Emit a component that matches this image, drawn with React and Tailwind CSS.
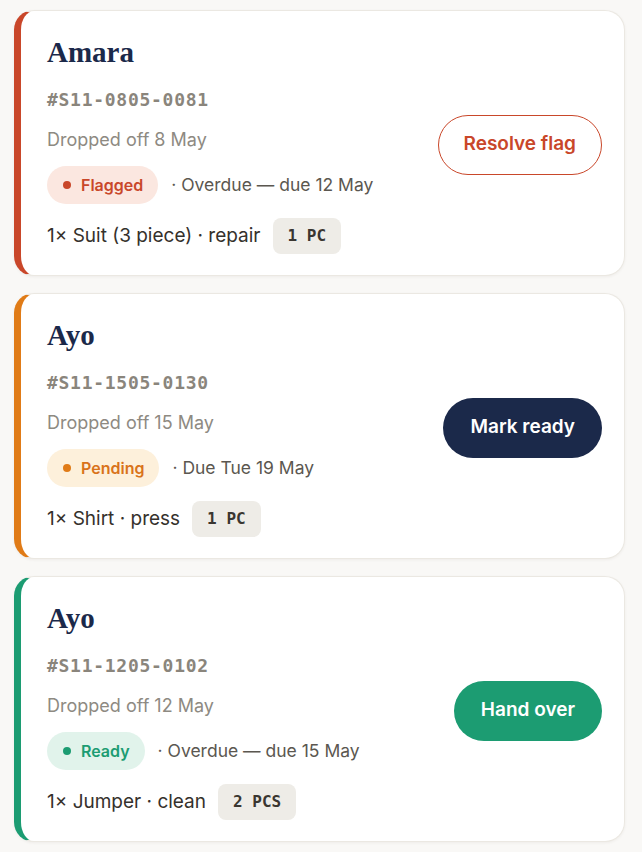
import React from 'react';

const orders = [
  {
    name: 'Amara',
    ref: '#S11-0805-0081',
    dropped: 'Dropped off 8 May',
    status: 'Flagged',
    due: '· Overdue — due 12 May',
    item: '1× Suit (3 piece) · repair',
    qty: '1 PC',
    tone: 'flagged',
    action: 'Resolve flag',
  },
  {
    name: 'Ayo',
    ref: '#S11-1505-0130',
    dropped: 'Dropped off 15 May',
    status: 'Pending',
    due: '· Due Tue 19 May',
    item: '1× Shirt · press',
    qty: '1 PC',
    tone: 'pending',
    action: 'Mark ready',
  },
  {
    name: 'Ayo',
    ref: '#S11-1205-0102',
    dropped: 'Dropped off 12 May',
    status: 'Ready',
    due: '· Overdue — due 15 May',
    item: '1× Jumper · clean',
    qty: '2 PCS',
    tone: 'ready',
    action: 'Hand over',
  },
];

const tones = {
  flagged: {
    bar: 'border-l-[#c9472a]',
    pill: 'bg-[#fbe7e0] text-[#c9472a]',
    dot: 'bg-[#c9472a]',
    button: 'border-[1.5px] border-[#c9472a] text-[#c9472a] bg-white px-[25px]',
  },
  pending: {
    bar: 'border-l-[#e07b17]',
    pill: 'bg-[#fdf0db] text-[#d9731a]',
    dot: 'bg-[#e07b17]',
    button: 'bg-[#1b294a] text-white px-[27px]',
  },
  ready: {
    bar: 'border-l-[#1c9c72]',
    pill: 'bg-[#e1f3eb] text-[#1c9c72]',
    dot: 'bg-[#1c9c72]',
    button: 'bg-[#1c9c72] text-white px-[27px]',
  },
};

function OrderCard({ order }) {
  const t = tones[order.tone];
  return (
    <div
      className={`flex items-center rounded-[20px] border border-[#ebe8e2] border-l-[7px] ${t.bar} bg-white pl-[26px] pr-[22px] pt-[24px] pb-[21px] shadow-[0_1px_3px_rgba(60,50,40,0.06)]`}
    >
      <div className="flex-1 min-w-0">
        <div className="h-[34px] text-[29px] leading-[34px] font-bold text-[#1b294a] font-['Liberation_Serif',serif]">
          {order.name}
        </div>
        <div className="mt-[19px] text-[18px] leading-[24px] font-bold tracking-[0.04em] text-[#8a857c] font-['DejaVu_Sans_Mono',monospace]">
          {order.ref}
        </div>
        <div className="mt-[16px] text-[18px] leading-[24px] text-[#8e8a82]">{order.dropped}</div>
        <div className="mt-[14px] flex items-center gap-[13px]">
          <span className={`flex h-[38px] items-center gap-[10px] rounded-full pl-[16px] pr-[15px] text-[16px] font-semibold ${t.pill}`}>
            <span className={`h-[8px] w-[8px] rounded-full ${t.dot}`} />
            {order.status}
          </span>
          <span className="text-[17.5px] text-[#5b5750]">{order.due}</span>
        </div>
        <div className="mt-[14px] flex items-center gap-[12px]">
          <span className="text-[19px] text-[#35312c]">{order.item}</span>
          <span className="flex h-[36px] items-center rounded-[8px] bg-[#eeece7] px-[15px] text-[16px] font-bold text-[#3a3631] font-['DejaVu_Sans_Mono',monospace]">
            {order.qty}
          </span>
        </div>
      </div>
      <button className={`h-[60px] shrink-0 rounded-full text-[19px] font-semibold ${t.button}`}>
        {order.action}
      </button>
    </div>
  );
}

export default function App() {
  return (
    <div className="min-h-screen bg-[#f9f8f6] pl-[14px] pr-[17px] pt-[10px] pb-[10px] font-['Inter',sans-serif]">
      <div className="flex flex-col gap-[17px]">
        {orders.map((o) => (
          <OrderCard key={o.ref} order={o} />
        ))}
      </div>
    </div>
  );
}
